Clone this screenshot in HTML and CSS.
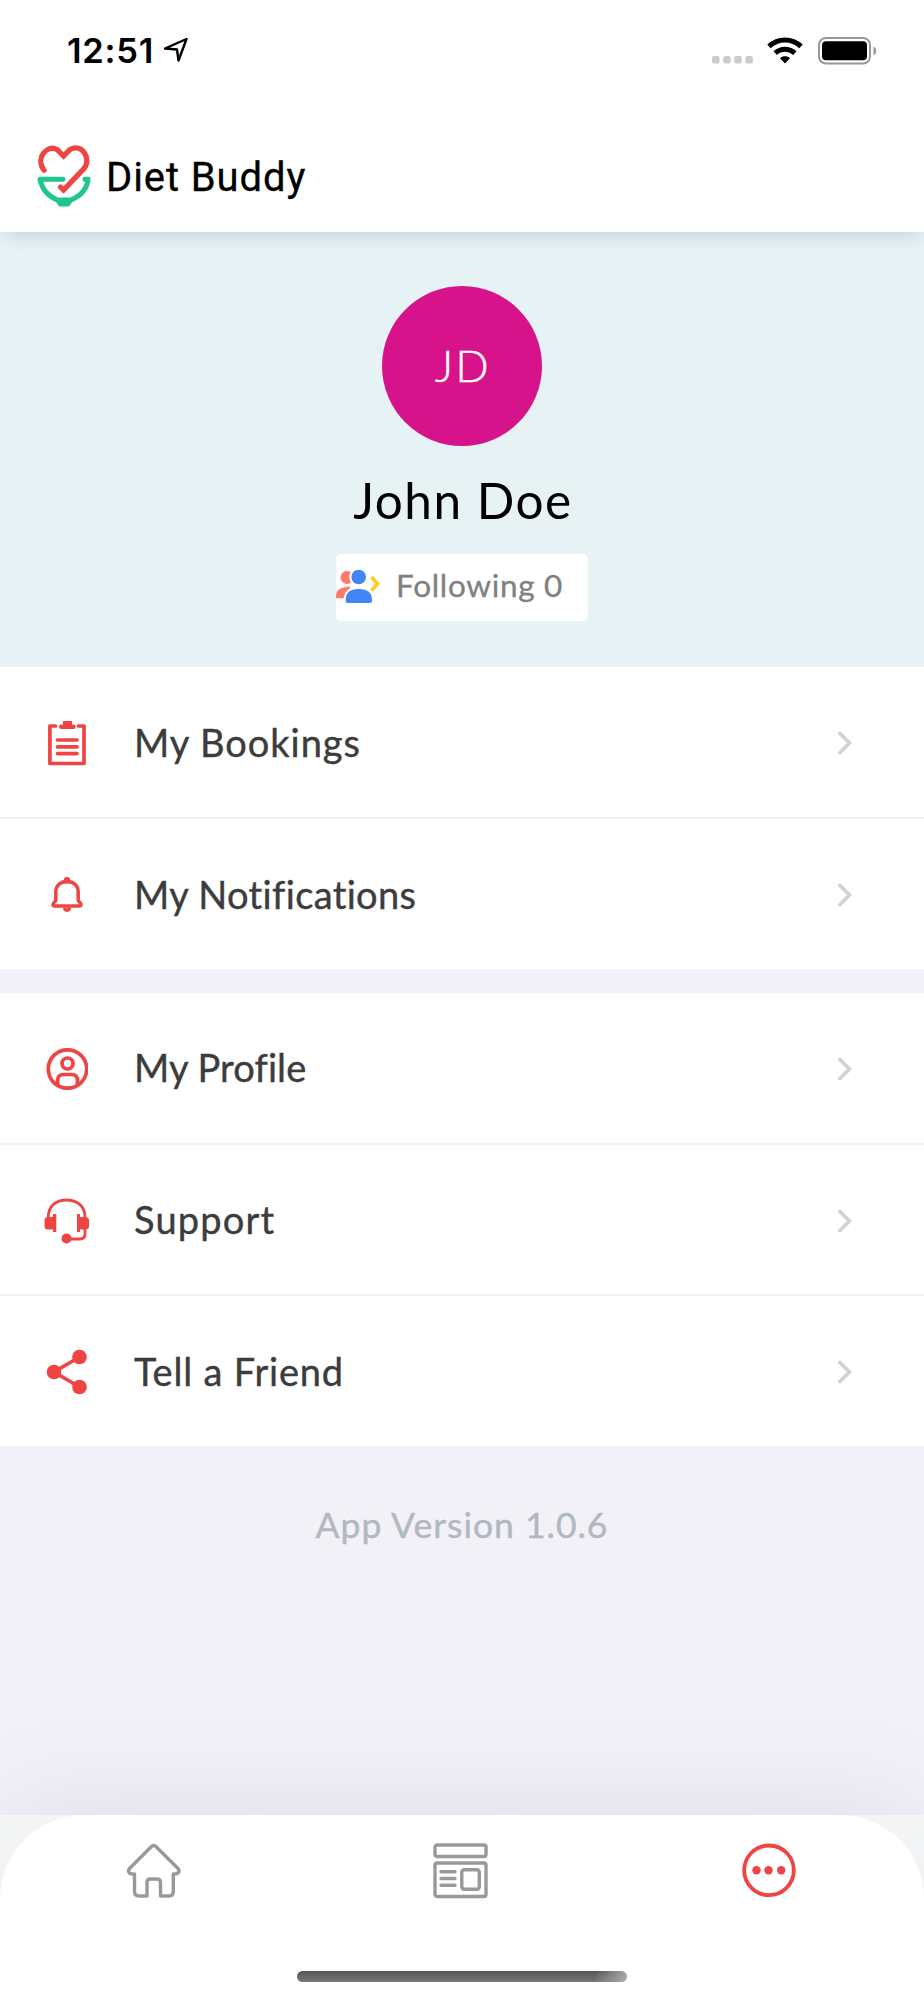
FILE: index.html
```html
<!DOCTYPE html>
<html lang="en">
<head>
<meta charset="utf-8">
<title>Diet Buddy</title>
<link rel="stylesheet" href="styles.css">
</head>
<body>
<div class="screen">
  <header class="header">
    <div class="status">
      <div class="status-left">
        <span class="time">12:51</span>
        <svg class="locate" width="26" height="26" viewBox="0 0 26 26"><path d="M2 11.5 23.5 2 15.5 23.5 14 12.5Z" fill="none" stroke="#000" stroke-width="2.4" stroke-linejoin="round"/></svg>
      </div>
      <div class="status-right">
        <svg width="42" height="8" viewBox="0 0 42 8" class="signal"><g fill="#cbcbcb"><rect width="7.5" height="7.5" rx="2"/><rect x="11.2" width="7.5" height="7.5" rx="2"/><rect x="22.3" width="7.5" height="7.5" rx="2"/><rect x="33.4" width="7.5" height="7.5" rx="2"/></g></svg>
        <svg width="36" height="27" viewBox="0 0 36 27" class="wifi"><g fill="none" stroke="#000" stroke-width="5"><path d="M2 9.4C11 .7 25 .7 34 9.4"/><path d="M8.2 16.2C13.9 11 22.1 11 27.8 16.2"/></g><path d="M18 26.5 13 21.3C15.8 18.7 20.2 18.7 23 21.3Z"/></svg>
        <svg width="60" height="28" viewBox="0 0 60 28" class="battery"><rect x="1" y="1" width="51" height="25.5" rx="7" fill="none" stroke="#989898" stroke-width="2"/><rect x="4" y="4.2" width="45" height="19" rx="4"/><path d="M55.5 9.5C59 11 59 17 55.5 18.5Z" fill="#989898"/></svg>
      </div>
    </div>
    <div class="brand">
      <svg class="brand-mark" width="54" height="62" viewBox="0 0 54 62"><path d="M26 34.200H3C5 45 11.500 51 20 55H34C43 51 50 45 51 34.200H48" fill="none" stroke="#20c58f" stroke-width="5" stroke-linecap="round" stroke-linejoin="round"/><path d="M17.500 54H37.500L32 61.500H22Z" fill="#20c58f"/><path d="M47 23.500 26.500 45 23.500 42" fill="none" stroke="#fff" stroke-width="8"/><path d="M7 25.200C-2 13 10-1 20 4.500L26.500 11 33 4.500C45-2 55 14 47 23.500L26.500 45 23.500 42" fill="none" stroke="#ef4444" stroke-width="5.300" stroke-linecap="round"/></svg>
      <span class="brand-name">Diet Buddy</span>
    </div>
  </header>

  <section class="hero">
    <div class="avatar"><span>JD</span></div>
    <h1 class="name"><span>John Doe</span></h1>
    <div class="following">
      <svg width="44" height="34" viewBox="0 0 44 34"><g fill="#ff7a6b"><circle cx="11" cy="8.500" r="6.500"/><path d="M0 29.300V27C0 21 5 17.500 14 17.500V29.300Z"/></g><g fill="#4285f4" stroke="#fff" stroke-width="2"><circle cx="22.700" cy="8" r="8.300"/><path d="M8.700 32V31C8.700 23 14 19 22.700 19S37 23 37 31V32Q37 35 34 35H11.700Q8.700 35 8.700 32Z"/></g><path d="M35.500 8 41.500 14.800 35.500 21.500" fill="none" stroke="#ffcc1f" stroke-width="3.600"/></svg>
      <span class="following-text">Following 0</span>
    </div>
  </section>

  <nav class="group group-a">
    <a class="row"><span class="icon"><svg width="38" height="46" viewBox="0 0 38 46"><g fill="none" stroke="#ef4444" stroke-width="3.700" stroke-linecap="round" stroke-linejoin="round"><path d="M7.500 6H1.900V43.500H36V6H30.500"/><path d="M9.500 20H29M9.500 26.800H29M9.500 33.600H29"/></g><path d="M15 1H24V4.500H25.500A2.200 2.200 0 0 1 25.500 9H13.200A2.200 2.200 0 0 1 13.200 4.500H15Z" fill="#ef4444"/></svg></span><span class="label bookings">My Bookings</span><svg class="chev" width="14" height="24" viewBox="0 0 14 24"><path d="M2 2.500 11.500 12 2 21.500"/></svg></a>
    <a class="row"><span class="icon"><svg width="32" height="36" viewBox="0 0 32 36"><g fill="none" stroke="#ef4444" stroke-width="3.500" stroke-linejoin="round"><path d="M16 4.500C9 4.500 4.800 9 4.800 15V23C4.800 25 2 25.500 2 27.500 2 28.500 2.500 29 4 29H28C29.500 29 30 28.500 30 27.500 30 25.500 27.200 25 27.200 23V15C27.200 9 23 4.500 16 4.500Z"/><path d="M13.700 30.500C13.700 34 18.300 34 18.300 30.500"/></g><circle cx="16" cy="3.300" r="3.200" fill="#ef4444"/></svg></span><span class="label notifications">My Notifications</span><svg class="chev" width="14" height="24" viewBox="0 0 14 24"><path d="M2 2.500 11.500 12 2 21.500"/></svg></a>
  </nav>
  <nav class="group group-b">
    <a class="row"><span class="icon"><svg width="42" height="42" viewBox="0 0 42 42"><g fill="none" stroke="#ef4444" stroke-width="3.700"><circle cx="21.500" cy="21" r="19.200"/><circle cx="21.500" cy="15.500" r="5.500"/><path d="M11.700 37V32.500Q11.700 26.500 17.500 26.500H25.500Q31.500 26.500 31.500 32.500V37"/></g></svg></span><span class="label profile">My Profile</span><svg class="chev" width="14" height="24" viewBox="0 0 14 24"><path d="M2 2.500 11.500 12 2 21.500"/></svg></a>
    <a class="row"><span class="icon"><svg width="46" height="46" viewBox="0 0 46 46"><g fill="none" stroke="#ef4444" stroke-width="2.800"><path d="M4.300 20V19C4.300 8 12 2 22.500 2S41 8 41 19V20"/><path d="M41 31V36Q41 41 36 41H24"/></g><path d="M4 19H9V16H12.300V34H9V31.500H4Q.5 31.500.5 28V22.500Q.5 19 4 19ZM41 19H36V16H33V34H36V31.500H41Q45 31.500 45 28V22.500Q45 19 41 19Z" fill="#ef4444"/><circle cx="22.500" cy="40.500" r="5" fill="#ef4444"/></svg></span><span class="label support">Support</span><svg class="chev" width="14" height="24" viewBox="0 0 14 24"><path d="M2 2.500 11.500 12 2 21.500"/></svg></a>
    <a class="row"><span class="icon"><svg width="42" height="46" viewBox="0 0 42 46"><path d="M33.500 8 8 23 33.500 38" fill="none" stroke="#ef4444" stroke-width="3.700"/><g fill="#ef4444"><circle cx="33.500" cy="8" r="7.300"/><circle cx="8" cy="23" r="7.300"/><circle cx="33.500" cy="38" r="7.300"/></g></svg></span><span class="label friend">Tell a Friend</span><svg class="chev" width="14" height="24" viewBox="0 0 14 24"><path d="M2 2.500 11.500 12 2 21.500"/></svg></a>
  </nav>

  <div class="version">App Version 1.0.6</div>

  <footer class="dock">
    <div class="tabs">
      <div class="tab-row">
        <svg class="tab" width="54" height="56" viewBox="0 0 54 56"><path d="M24.500 2.500Q26.700.6 28.900 2.500L51 24.500Q53 27 51 29Q50 30 46.300 30V47.500Q46.300 52 42 52H33.500V38.500Q33.500 35 30 35H23.500Q20 35 20 38.500V52H12Q7.500 52 7.500 47.500V30Q3.500 30 2.500 29Q.5 27 2.500 24.500Z"/></svg>
        <svg class="tab" width="56" height="56" viewBox="1 1 56 56"><rect x="2" y="2" width="51" height="11.500" rx="2"/><rect x="2" y="20" width="51" height="33.500" rx="2"/><rect x="28.800" y="26.800" width="17.500" height="19.500" rx="2.500"/><path d="M8 28.800H22M8 35.500H22M8 42.300H22"/></svg>
        <svg class="tab" width="54" height="54" viewBox="0 .7 54 54"><circle cx="27" cy="27" r="24.800" fill="none" stroke="#ef4444" stroke-width="3.800"/><g fill="#ef4444" stroke="none"><circle cx="14.500" cy="27" r="4.200"/><circle cx="26.500" cy="27" r="4.200"/><circle cx="39.200" cy="27" r="4.200"/></g></svg>
      </div>
      <div class="home-indicator"></div>
    </div>
  </footer>
</div>
</body>
</html>
```

FILE: styles.css
```css
* { box-sizing: border-box; }
body { margin: 0; background: #f2f1f7; font-family: Lato, "Open Sans", sans-serif; }
.screen { width: 924px; height: 2000px; display: flex; flex-direction: column; overflow: hidden; }
.header { height: 232px; background: #fff; box-shadow: 0 10px 16px -4px rgba(0, 0, 0, .1); z-index: 1; flex: none; display: flex; flex-direction: column; }
.status { height: 101px; display: flex; justify-content: space-between; padding: 0 46px 0 67px; }
.status-left { display: flex; padding-top: 30px; gap: 9px; }
.time { font: 600 34.500px/41px Inter, sans-serif; letter-spacing: .75px; }
.locate { margin-top: 7px; }
.status-right { display: flex; padding-top: 37px; }
.signal { margin-top: 19px; margin-right: 13px; }
.wifi { margin-right: 15px; }
.brand { padding: 44px 0 0 37px; display: flex; }
.brand-mark { overflow: visible; }
.brand-name { font: 400 40px/48px Roboto, sans-serif; letter-spacing: .9px; margin: 9px 0 0 15px; -webkit-text-stroke: .3px #000; }
.hero { height: 435px; flex: none; background: #e6f2f4; display: flex; flex-direction: column; align-items: center; padding-top: 54px; }
.avatar { width: 160px; height: 160px; border-radius: 50%; background: #d6138b; color: #fff; display: flex; align-items: center; justify-content: center; font-size: 43.500px; font-weight: 300; letter-spacing: 2.500px; padding: 0 0 3px 2px; -webkit-text-stroke: .5px #fff; }
.name { margin: 24px 0 0 2px; height: 84px; font-size: 49.500px; line-height: 60px; font-weight: 400; letter-spacing: 1.500px; color: #000; }
.following { width: 252px; height: 67px; background: #fff; border-radius: 5px; display: flex; padding-top: 15px; }
.following-text { font-size: 31.500px; line-height: 36px; color: #808080; margin: -2px 0 0 16px; letter-spacing: .7px; -webkit-text-stroke: .3px #808080; }
.group { display: flex; flex-direction: column; gap: 2px; flex: none; }
.group-a { height: 302px; margin-bottom: 24px; }
.group-b { height: 453px; }
.row { flex: 1; background: #fff; display: flex; align-items: center; padding: 2px 72px 0 0; }
.icon { width: 134px; display: flex; justify-content: center; }
.label { font-size: 38px; line-height: 48px; color: #3c3c3c; margin-top: -3px; -webkit-text-stroke: .4px #3c3c3c; }
.bookings { letter-spacing: .950px; }
.notifications { letter-spacing: .35px; }
.profile { letter-spacing: .1px; }
.support { letter-spacing: 1.200px; }
.friend { letter-spacing: .8px; }
.chev { margin-left: auto; fill: none; stroke: #d2d2d2; stroke-width: 3.800; stroke-linecap: round; stroke-linejoin: round; }
.version { padding-top: 54px; text-align: center; color: #b0b9bf; font-size: 35.500px; line-height: 49px; letter-spacing: 1px; -webkit-text-stroke: .4px #b0b9bf; }
.dock { margin-top: auto; height: 185px; flex: none; background: linear-gradient(#f4f6f6, #f1f1f4 85px); box-shadow: 0 0 120px rgba(0, 0, 0, .09); }
.tabs { height: 185px; background: #fff; border-radius: 84px 84px 0 0; display: flex; flex-direction: column; align-items: center; }
.tab-row { width: 924px; height: 156px; padding: 29px 128px 0 127px; display: flex; justify-content: space-between; }
.tab { fill: none; stroke: #999; stroke-width: 3.400; stroke-linecap: round; stroke-linejoin: round; overflow: visible; }
.home-indicator { width: 330px; height: 11px; border-radius: 6px; background: linear-gradient(100deg, transparent 90%, #aaa), linear-gradient(#555, #777); }
```
